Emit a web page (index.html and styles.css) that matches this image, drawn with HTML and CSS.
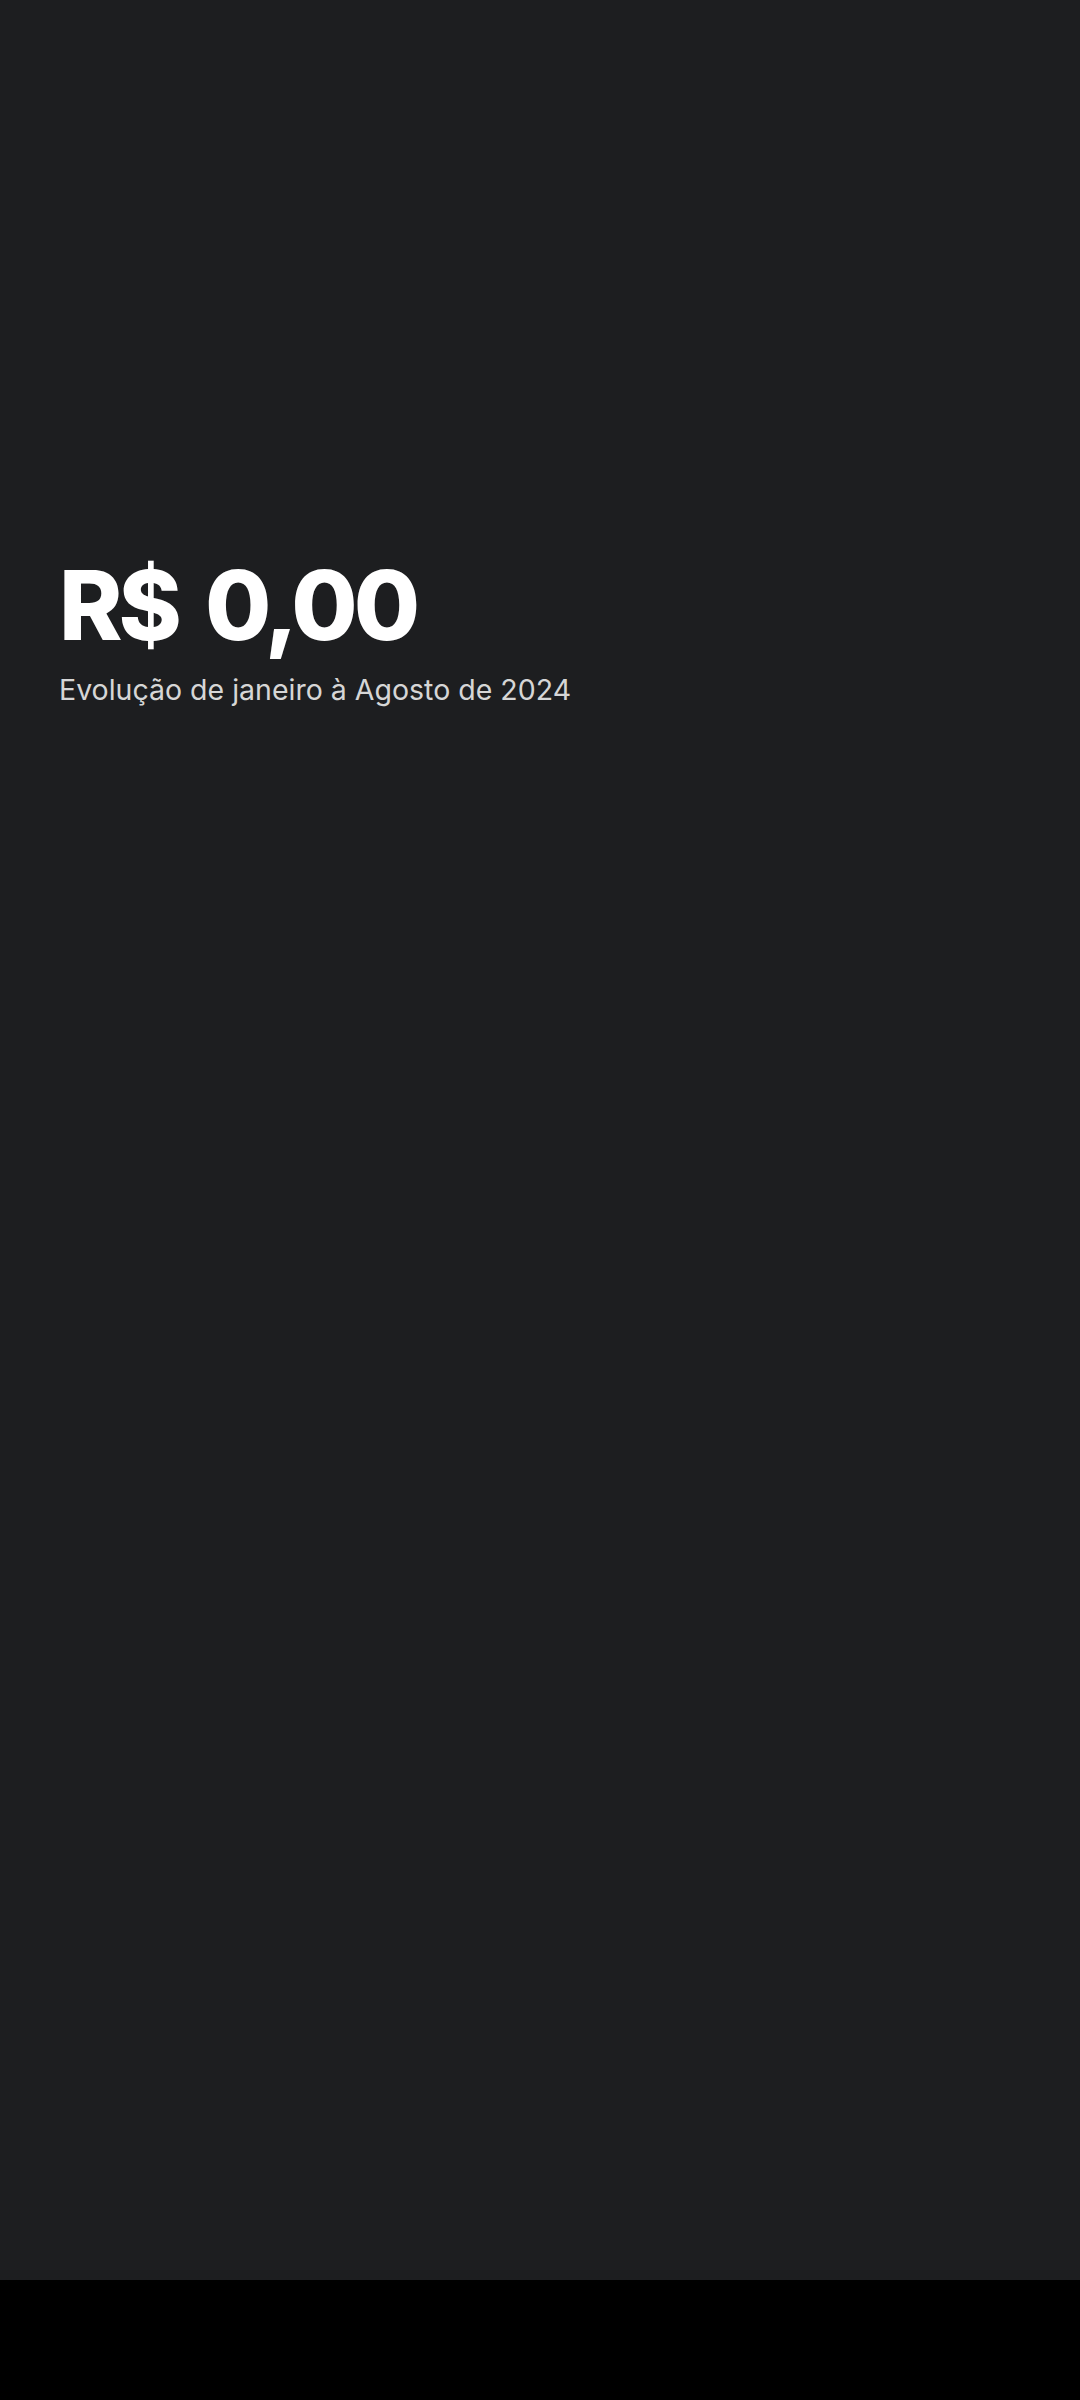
FILE: index.html
```html
<!DOCTYPE html>
<html lang="pt-BR">
<head>
<meta charset="utf-8">
<link rel="stylesheet" href="styles.css">
</head>
<body>
<main class="screen">
  <section class="summary">
    <h1 class="amount">R$ 0,00</h1>
    <p class="caption">Evolução de janeiro à Agosto de 2024</p>
  </section>
</main>
<div class="navbar"></div>
</body>
</html>
```
FILE: styles.css
```css
html, body {
  margin: 0;
  padding: 0;
  background: #000;
}
body {
  width: 1080px;
  height: 2400px;
  display: flex;
  flex-direction: column;
  font-family: Inter, "Noto Sans", sans-serif;
}
.screen {
  height: 2280px;
  background: #1d1e20;
  box-sizing: border-box;
  padding: 549px 0 0 59px;
}
.summary {
  display: flex;
  flex-direction: column;
}
.amount {
  margin: 0;
  color: #fff;
  font-size: 96px;
  font-weight: 800;
  line-height: 112px;
  letter-spacing: -4px;
  word-spacing: 10px;
}
.caption {
  margin: 11px 0 0;
  color: #d6d6d6;
  font-size: 28.5px;
  font-weight: 400;
  line-height: 36px;
}
.navbar {
  height: 120px;
  background: #000;
}
```
